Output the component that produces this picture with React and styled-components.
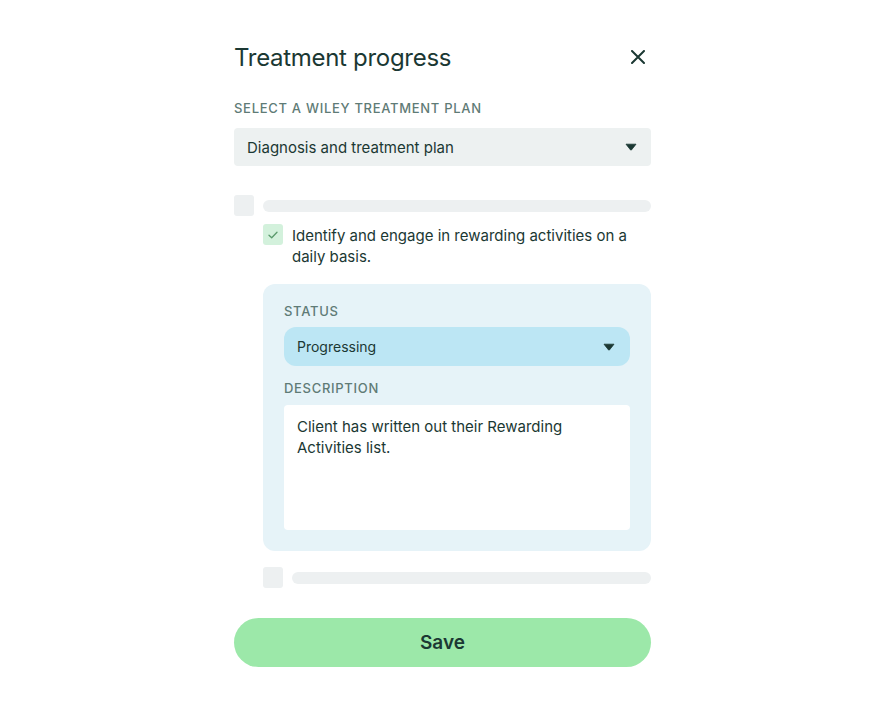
import React from "react";
import styled, { createGlobalStyle } from "styled-components";

const Global = createGlobalStyle`
  html, body { margin: 0; padding: 0; background: #ffffff; }
  body { font-family: Inter, "Noto Sans", sans-serif; color: #1b3833; -webkit-font-smoothing: antialiased; }
  * { box-sizing: border-box; }
`;

const Page = styled.div`
  width: 885px;
  height: 708px;
  display: flex;
  justify-content: center;
  padding-top: 40px;
`;

const Panel = styled.div`
  width: 417px;
  display: flex;
  flex-direction: column;
`;

const Header = styled.div`
  display: flex;
  align-items: center;
  justify-content: space-between;
  height: 34px;
`;

const Title = styled.h1`
  margin: 0;
  font-size: 24px;
  font-weight: 400;
  letter-spacing: -0.3px;
  color: #1b3833;
`;

const CloseButton = styled.button`
  border: 0;
  background: none;
  padding: 0;
  width: 24px;
  height: 24px;
  display: flex;
  align-items: center;
  justify-content: center;
  margin-right: 1px;
  cursor: pointer;
`;

const Label = styled.div`
  font-size: 13px;
  font-weight: 500;
  letter-spacing: 0.7px;
  text-transform: uppercase;
  color: #5f7b76;
  margin: ${(p) => p.$m || "0"};
`;

const Select = styled.div`
  height: ${(p) => (p.$variant === "status" ? "39px" : "38px")};
  border-radius: ${(p) => (p.$variant === "status" ? "12px" : "4px")};
  background: ${(p) => (p.$variant === "status" ? "#bce6f4" : "#edf1f1")};
  display: flex;
  align-items: center;
  justify-content: space-between;
  padding: ${(p) => (p.$variant === "status" ? "0 15px 0 13px" : "0 14px 0 13px")};
  font-size: ${(p) => (p.$variant === "status" ? "14px" : "15px")};
  color: #1b3833;
`;

const Caret = () => (
  <svg width="12" height="8" viewBox="0 0 12 8">
    <path d="M1 1.2 L11 1.2 L6.4 7 Q6 7.4 5.6 7 Z" fill="#1b3833" stroke="#1b3833" strokeWidth="0.8" strokeLinejoin="round" />
  </svg>
);

const Tree = styled.div`
  display: flex;
  flex-direction: column;
  margin-top: 29px;
`;

const Row = styled.div`
  display: flex;
  align-items: ${(p) => (p.$top ? "flex-start" : "center")};
  gap: 9px;
  padding-left: ${(p) => p.$indent || 0}px;
  margin-top: ${(p) => p.$mt || 0}px;
`;

const Box = styled.div`
  width: 20px;
  height: 21px;
  flex: none;
  border-radius: 3px;
  background: ${(p) => (p.$checked ? "#d3f1dc" : "#edf0f1")};
  display: flex;
  align-items: center;
  justify-content: center;
`;

const Bar = styled.div`
  flex: 1;
  height: 12px;
  border-radius: 6px;
  background: #edf0f1;
`;

const ItemText = styled.div`
  font-size: 15px;
  line-height: 21px;
  color: #1b3833;
  margin-top: 1px;
`;

const Details = styled.div`
  margin: 17px 0 0 29px;
  background: #e6f3f8;
  border-radius: 12px;
  padding: 19px 21px 21px;
  display: flex;
  flex-direction: column;
`;

const TextArea = styled.div`
  height: 125px;
  background: #ffffff;
  border-radius: 4px;
  padding: 11px 13px;
  font-size: 15px;
  line-height: 21px;
  color: #1b3833;
`;

const SaveButton = styled.button`
  margin-top: 30px;
  height: 49px;
  border: 0;
  border-radius: 25px;
  background: #9ce8a9;
  font-family: inherit;
  font-size: 19px;
  font-weight: 600;
  color: #1b3833;
  cursor: pointer;
`;

export default function App() {
  return (
    <>
      <Global />
      <Page>
        <Panel>
          <Header>
            <Title>Treatment progress</Title>
            <CloseButton aria-label="Close">
              <svg width="14" height="14" viewBox="0 0 14 14">
                <path d="M1 1 L13 13 M13 1 L1 13" stroke="#1b3833" strokeWidth="2" strokeLinecap="round" />
              </svg>
            </CloseButton>
          </Header>
          <Label $m="26px 0 12px">Select a Wiley treatment plan</Label>
          <Select>
            <span>Diagnosis and treatment plan</span>
            <Caret />
          </Select>
          <Tree>
            <Row>
              <Box />
              <Bar />
            </Row>
            <Row $indent={29} $top $mt={8}>
              <Box $checked>
                <svg width="10" height="8" viewBox="0 0 10 8">
                  <path d="M1 4.2 L3.7 6.8 L9 1.2" fill="none" stroke="#5a9a6c" strokeWidth="1.3" strokeLinecap="round" strokeLinejoin="round" />
                </svg>
              </Box>
              <ItemText>Identify and engage in rewarding activities on a daily basis.</ItemText>
            </Row>
            <Details>
              <Label $m="0 0 8px">Status</Label>
              <Select $variant="status">
                <span>Progressing</span>
                <Caret />
              </Select>
              <Label $m="14px 0 9px">Description</Label>
              <TextArea>Client has written out their Rewarding Activities list.</TextArea>
            </Details>
            <Row $indent={29} $mt={16}>
              <Box />
              <Bar />
            </Row>
          </Tree>
          <SaveButton>Save</SaveButton>
        </Panel>
      </Page>
    </>
  );
}
